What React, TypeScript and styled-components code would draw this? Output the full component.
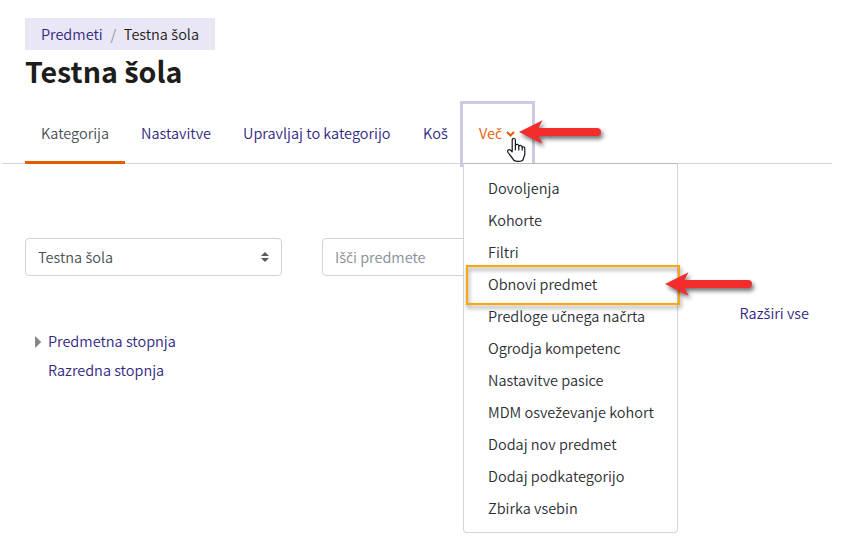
import React from "react";
import styled, { createGlobalStyle } from "styled-components";

const GlobalStyle = createGlobalStyle`
  * { box-sizing: border-box; }
  body {
    margin: 0;
    background: #fff;
    color: #212529;
    font-family: "Noto Sans CJK SC", "Open Sans", sans-serif;
    font-size: 14.5px;
    font-weight: 350;
    line-height: 24px;
  }
`;

const Page = styled.div`
  position: relative;
  width: 848px;
  height: 553px;
  padding-top: 18px;
  overflow: hidden;
`;

const Accented = styled.span<{ $bold?: boolean }>`
  font-family: "Open Sans", sans-serif;
  font-weight: ${(p) => (p.$bold ? 700 : 400)};
  line-height: 0;
`;

const Breadcrumb = styled.nav`
  display: flex;
  width: 190px;
  height: 32px;
  margin-left: 25px;
  padding: 0 16px;
  align-items: center;
  background: #e9e6f5;
  white-space: nowrap;
`;

const Crumb = styled.a<{ $current?: boolean }>`
  color: ${(p) => (p.$current ? "#1d1d1b" : "#312783")};
`;

const Slash = styled.span`
  width: 23px;
  text-align: center;
  color: #868e96;
`;

const Title = styled.h1`
  height: 40px;
  margin: 1px 0 3px 25px;
  font-size: 28.6px;
  font-weight: 700;
  line-height: 40px;
  color: #1d1d1b;
`;

const Tabs = styled.nav`
  display: flex;
  width: 830px;
  height: 70px;
  margin-left: 2px;
  padding-left: 23px;
  align-items: flex-end;
  border-bottom: 1px solid #d5d5d5;
`;

const Tab = styled.a<{ $width: number; $active?: boolean }>`
  width: ${(p) => p.$width}px;
  height: 60px;
  margin-bottom: -1px;
  padding: 17px 0 0 16px;
  border-bottom: 3px solid ${(p) => (p.$active ? "#e55b00" : "transparent")};
  color: ${(p) => (p.$active ? "#495057" : "#312783")};
  white-space: nowrap;
`;

const MoreTab = styled.a`
  display: flex;
  width: 75px;
  height: 66px;
  margin: 0 0 -4px -3px;
  padding: 17px 0 0 16px;
  align-items: flex-start;
  gap: 4px;
  border: 3px solid #cdc9e0;
  border-bottom: 0;
  color: #e55b00;
`;

const Chevron = styled.svg`
  width: 9px;
  height: 6px;
  margin-top: 10px;
`;

const Filters = styled.div`
  display: flex;
  margin: 74px 0 0 25px;
  gap: 40px;
`;

const Field = styled.div<{ $placeholder?: boolean }>`
  display: flex;
  width: 257px;
  height: 38px;
  padding: 0 12px;
  align-items: center;
  justify-content: space-between;
  border: 1px solid #ced4da;
  border-radius: 4px;
  color: ${(p) => (p.$placeholder ? "#868e96" : "#495057")};
`;

const Lower = styled.div`
  display: flex;
  justify-content: space-between;
  padding: 25px 39px 0 34px;
`;

const Tree = styled.ul`
  display: grid;
  grid-auto-rows: 29px;
  margin: 25px 0 0;
  padding: 0;
  list-style: none;
`;

const Branch = styled.li`
  display: grid;
  grid-template-columns: 14px auto;
  align-items: center;
`;

const Link = styled.a`
  grid-column: 2;
  color: #312783;
  white-space: nowrap;
`;

const Triangle = styled.svg`
  width: 8px;
  height: 12px;
  margin-top: 2px;
`;

const Menu = styled.div`
  position: absolute;
  left: 463px;
  top: 163px;
  width: 215px;
  height: 370px;
  padding-top: 8px;
  border: 1px solid #d5d5d5;
  border-top-color: #b9b9bb;
  border-radius: 0 0 4px 4px;
  background: #fff;
`;

const MenuItem = styled.a`
  display: block;
  height: 32px;
  padding: 4px 24px;
  color: #2b2f33;
  white-space: nowrap;
`;

const Highlight = styled.div`
  position: absolute;
  left: 466px;
  top: 265px;
  width: 214px;
  height: 40px;
  border: 2px solid #f9a90a;
  filter: drop-shadow(1px 3px 2px rgba(0, 0, 0, 0.45));
`;

const ArrowSvg = styled.svg<{ $x: number; $y: number }>`
  position: absolute;
  left: ${(p) => p.$x}px;
  top: ${(p) => p.$y}px;
  width: 90px;
  height: 26px;
  overflow: visible;
  filter: drop-shadow(2px 3px 2px rgba(0, 0, 0, 0.55));
`;

const Cursor = styled.svg`
  position: absolute;
  left: 506px;
  top: 137px;
  width: 20px;
  height: 26px;
`;

const Arrow = ({ x, y, length }: { x: number; y: number; length: number }) => (
  <ArrowSvg $x={x} $y={y} viewBox="0 0 90 26">
    <path
      d={`M0 12L23.5 .3 19.5 8H${length - 4}a4 4 0 0 1 0 8H19.5L23.5 23.7Z`}
      fill="#f42c2c"
    />
  </ArrowSvg>
);

const Label = ({ text, bold }: { text: string; bold?: boolean }) => (
  <span>
    {text.split(/([ščž])/).map((part, i) =>
      i % 2 ? (
        <Accented key={i} $bold={bold}>
          {part}
        </Accented>
      ) : (
        part
      ),
    )}
  </span>
);

const tabs = [
  { label: "Kategorija", width: 100, active: true },
  { label: "Nastavitve", width: 102 },
  { label: "Upravljaj to kategorijo", width: 180 },
  { label: "Koš", width: 56 },
];

const menuItems = [
  "Dovoljenja",
  "Kohorte",
  "Filtri",
  "Obnovi predmet",
  "Predloge učnega načrta",
  "Ogrodja kompetenc",
  "Nastavitve pasice",
  "MDM osveževanje kohort",
  "Dodaj nov predmet",
  "Dodaj podkategorijo",
  "Zbirka vsebin",
];

export default function App() {
  return (
    <Page>
      <GlobalStyle />
      <Breadcrumb>
        <Crumb>Predmeti</Crumb>
        <Slash>/</Slash>
        <Crumb $current>
          <Label text="Testna šola" />
        </Crumb>
      </Breadcrumb>
      <Title>
        <Label text="Testna šola" bold />
      </Title>
      <Tabs>
        {tabs.map((t) => (
          <Tab key={t.label} $width={t.width} $active={t.active}>
            <Label text={t.label} />
          </Tab>
        ))}
        <MoreTab>
          <Label text="Več" />
          <Chevron viewBox="0 0 9 6">
            <path d="M1 1L4.5 4.5 8 1" fill="none" stroke="#e55b00" strokeWidth="2" />
          </Chevron>
        </MoreTab>
      </Tabs>
      <Filters>
        <Field>
          <Label text="Testna šola" />
          <svg width="8" height="10" viewBox="0 0 8 10">
            <path d="M0 4L4 0 8 4ZM0 6H8L4 10Z" fill="#5a5a5a" />
          </svg>
        </Field>
        <Field $placeholder>
          <Label text="Išči predmete" />
        </Field>
      </Filters>
      <Lower>
        <Tree>
          <Branch>
            <Triangle viewBox="0 0 8 12">
              <path d="M1 0L7.3 6 1 12Z" fill="#868686" />
            </Triangle>
            <Link>Predmetna stopnja</Link>
          </Branch>
          <Branch>
            <Link>Razredna stopnja</Link>
          </Branch>
        </Tree>
        <Link>
          <Label text="Razširi vse" />
        </Link>
      </Lower>
      <Menu>
        {menuItems.map((item) => (
          <MenuItem key={item}>
            <Label text={item} />
          </MenuItem>
        ))}
      </Menu>
      <Highlight />
      <Arrow x={519} y={120} length={82} />
      <Arrow x={665} y={272} length={87} />
      <Cursor viewBox="0 0 20 26">
        <path
          d="M6.2 14.8V3.2C6.2.6 9.4.6 9.4 3.2V8.2C10.4 6.9 12.6 7.3 12.8 8.9 14 8 16 8.5 16.2 10 17.4 9.4 18.8 10.1 18.8 11.6V17C18.8 19 17.5 20.5 17.2 22.3 16.8 24.6 8.4 25.4 7.2 22.6 6.2 20.3 3.8 18.4 1.9 15.3.8 13.3 3.2 11.7 4.6 13.3Z"
          fill="#fff"
          stroke="#15151f"
          strokeWidth="1.2"
          strokeLinejoin="round"
        />
        <path d="M9.4 8V13.2M12.8 9V13.4M16.2 10V13.6" stroke="#15151f" strokeWidth="1.2" />
      </Cursor>
    </Page>
  );
}
